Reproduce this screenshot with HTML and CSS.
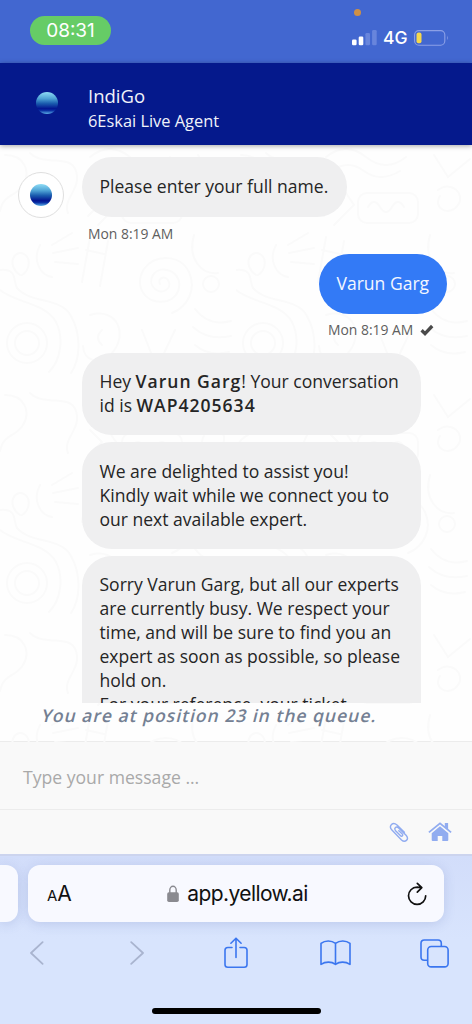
FILE: index.html
```html
<!DOCTYPE html>
<html lang="en">
<head>
  <meta charset="UTF-8" />
  <meta name="viewport" content="width=device-width, initial-scale=1.0"/>
  <title>IndiGo - 6Eskai Live Agent</title>
  <link rel="stylesheet" href="styles.css">
</head>
<body>
  <div class="status-bar">
    <span class="mic-dot"></span>
    <div class="clock">08:31</div>
    <div class="status-icons">
      <svg class="signal" width="25" height="16" viewBox="0 0 25 16">
        <rect x="0" y="9.5" width="4.6" height="5.8" rx="1.3" fill="#fff"/>
        <rect x="6.7" y="6.4" width="4.6" height="8.9" rx="1.3" fill="#fff"/>
        <rect x="13.4" y="3" width="4.6" height="12.3" rx="1.3" fill="#6885dc"/>
        <rect x="20.1" y="0" width="4.6" height="15.3" rx="1.3" fill="#6885dc"/>
      </svg>
      <span class="network">4G</span>
      <svg class="battery" width="36" height="16" viewBox="0 0 36 16">
        <rect x=".6" y=".6" width="30.2" height="14.6" rx="4.2" fill="none" stroke="#8ca0e6" stroke-width="1.1"/>
        <rect x="2.5" y="2.5" width="5" height="10.8" rx="2" fill="#f6d84c"/>
        <path d="M33 5.5q1.6 2.4 0 4.8z" fill="#8ca0e6"/>
      </svg>
    </div>
  </div>

  <header class="chat-header">
    <div class="logo"></div>
    <div class="titles">
      <div class="brand">IndiGo</div>
      <div class="agent">6Eskai Live Agent</div>
    </div>
  </header>

  <main class="conversation">
    <svg class="doodles" width="472" height="597" viewBox="0 0 472 597">
      <defs>
        <pattern id="doodle" width="236" height="240" patternUnits="userSpaceOnUse">
          <g fill="none" stroke="#fafafa" stroke-width="2" stroke-linecap="round">
            <path d="M160 139c-3-5 4-9 8-4 5 8-5 15-13 9-9-8-1-22 12-19 17 4 16 26 0 31-21 5-34-15-23-32 11-15 36-15 45 3 8 18-2 35-17 41"/>
            <path d="M0 125c18-2 13 12 17 18 14 16 44 9 54 28 10 18 10 42 0 57M0 145c16 13 46 13 56 32 8 16 5 38-7 50M20 130c-14-10-6-26 4-21 8 5 5 17-2 21"/>
            <circle cx="27" cy="198" r="20"/>
            <circle cx="27" cy="198" r="12"/>
            <path d="M40 100c-8 15 0 30 12 32M52 100l20-12M53 108l25-5M55 117l23 2M90 92l-8 45M108 96l-8 45M86 105l18 4"/>
            <path d="M5 10c20 0 26 17 18 30S4 48 0 66M30 8c14 14 40 0 46 18s-14 28-8 42M90 12q20-16 40 0t40 0M96 26q16-12 32 0t36 0"/>
            <rect x="122" y="48" width="60" height="30" rx="9"/>
            <path d="M132 62q6-10 12 0t12 0 12 0M194 90c-7 24 8 40 24 38M198 10l14 22 22-18M202 45c12-10 28 3 20 15s-26 4-18-9"/>
            <path d="M90 170c28-8 38 20 22 38-14 14-28 7-29-7M102 185q-8 8 0 15M142 185l15 38 18-38M137 228q22 12 46-2M195 164q14 18 36 12M193 182q15 14 38 9M195 200q14 12 34 7"/>
            <circle cx="211" cy="139" r="8"/>
            <path d="M90 45l12 12-14 14M103 38l15 22-20 20"/>
          </g>
        </pattern>
      </defs>
      <rect width="472" height="597" fill="url(#doodle)"/>
    </svg>

    <div class="messages">
      <div class="row">
        <div class="avatar"><div class="logo"></div></div>
        <div class="bubble short">Please enter your full name.</div>
      </div>
      <div class="time">Mon 8:19 AM</div>

      <div class="bubble user">Varun Garg</div>
      <div class="time sent">Mon 8:19 AM
        <svg width="14" height="12" viewBox="0 0 14 12"><path d="M1.6 6.3L5 9.6 12.2 2" fill="none" stroke="#4a4a4a" stroke-width="3.3"/></svg>
      </div>

      <div class="bubble">Hey <b>Varun Garg</b>! Your conversation<br>id is <b>WAP4205634</b></div>
      <div class="bubble">We are delighted to assist you!<br>Kindly wait while we connect you to<br>our next available expert.</div>
      <div class="bubble">Sorry Varun Garg, but all our experts<br>are currently busy. We respect your<br>time, and will be sure to find you an<br>expert as soon as possible, so please<br>hold on.<br>For your reference, your ticket</div>
    </div>

    <div class="queue">You are at position 23 in the queue.</div>
  </main>

  <div class="message-input">Type your message ...</div>
  <div class="tools">
    <svg width="20" height="21" viewBox="0 0 20 21" fill="none" stroke="#91acf0" stroke-width="1.4" stroke-linecap="round">
      <path d="M15.4 10.2L8 3.100C3.800-.8-.8 4 2.900 8l9.600 10c3.700 3.200 7.900-.7 4.800-4.500L9.600 5.900C6.800 3.900 4.700 6.300 6.600 8.700l5.200 5.200c1.300 1 2.600-.5 1.500-1.800L9.800 8.700"/>
    </svg>
    <svg width="24" height="20" viewBox="0 0 24 20" fill="#91acf0">
      <path d="M12 4.300L3.700 11.200V18q0 1 1 1h5v-4.900h4.600V19h5q1 0 1-1v-6.800z"/>
      <path d="M.9 10.400L12 1.300l11.100 9.100" fill="none" stroke="#91acf0" stroke-width="1.8"/>
      <path d="M16.800 1h3.300v7l-3.300-2.700z"/>
    </svg>
  </div>

  <footer class="browser-bar">
    <div class="tabs">
      <div class="prev-tab"></div>
      <div class="address">
        <span class="text-size"><small>A</small>A</span>
        <div class="url">
          <svg width="12" height="18" viewBox="0 0 12 18">
            <path d="M2.800 8V5a3.200 3.700 0 0 1 6.400 0v3" fill="none" stroke="#8a8a90" stroke-width="1.4"/>
            <rect x=".2" y="7.3" width="11.6" height="9.7" rx="1.7" fill="#8a8a90"/>
          </svg>
          <span>app.yellow.ai</span>
        </div>
        <svg class="reload" width="20" height="24" viewBox="0 0 20 24" fill="none" stroke="#111" stroke-width="1.7" stroke-linecap="round" stroke-linejoin="round">
          <path d="M10 5.200a8.600 8.600 0 1 0 8.700 8.600M10 5.200l4.500.3M10.300 1.300l4.500 4.300-4.500 4.500"/>
        </svg>
      </div>
    </div>
    <nav class="nav">
      <svg width="14" height="24" viewBox="0 0 14 24" fill="none" stroke="#a9b4cf" stroke-width="1.8" stroke-linecap="round" stroke-linejoin="round"><path d="M12.600 1.200L1 12l11.600 10.800"/></svg>
      <svg width="14" height="24" viewBox="0 0 14 24" fill="none" stroke="#a9b4cf" stroke-width="1.8" stroke-linecap="round" stroke-linejoin="round"><path d="M1.200 1.200L13 12 1.200 22.800"/></svg>
      <svg width="24" height="32" viewBox="0 0 24 32" fill="none" stroke="#3b76ef" stroke-width="1.6" stroke-linecap="round" stroke-linejoin="round"><path d="M8 10.500H3.800Q1 10.500 1 13.300v14.200q0 2.800 2.800 2.800h16.400q2.800 0 2.800-2.800V13.300q0-2.800-2.800-2.800H16M12 20.500V1.300M6.900 6.200L12 1.200l5.100 5"/></svg>
      <svg width="31" height="26" viewBox="0 0 31 26" fill="none" stroke="#3b76ef" stroke-width="1.6" stroke-linejoin="round"><path d="M15.500 3.400C11.500.1 5 .1 1 3.400v21c4.500-3 10.500-3 14.500 0 4-3 10-3 14.500 0v-21C26 .1 19.500.1 15.500 3.400zv21"/></svg>
      <svg width="29" height="29" viewBox="0 0 29 29" fill="none" stroke="#3b76ef" stroke-width="1.6"><path d="M7.500 21.300H4.300Q1 21.300 1 18V4.300Q1 1 4.300 1H18q3.300 0 3.300 3.300v3.200"/><rect x="7.7" y="7.5" width="20.4" height="20.4" rx="3.5"/></svg>
    </nav>
    <div class="home-indicator"></div>
  </footer>
</body>
</html>
```
FILE: styles.css
```css
body {
  font-family: "Open Sans", sans-serif;
  margin: 0;
  width: 472px;
  height: 1024px;
  overflow: hidden;
  display: flex;
  flex-direction: column;
  background-color: #fefefe;
}

svg {
  display: block;
  flex-shrink: 0;
}

.status-bar {
  position: relative;
  height: 63px;
  flex-shrink: 0;
  box-sizing: border-box;
  padding: 16px 22px 0 30px;
  display: flex;
  justify-content: space-between;
  align-items: flex-start;
  background-color: #4267d0;
  color: #fff;
  font-family: Inter, sans-serif;
}

.mic-dot {
  position: absolute;
  left: 354px;
  top: 9px;
  width: 7px;
  height: 7px;
  border-radius: 50%;
  background-color: #cf9045;
}

.clock {
  width: 81px;
  height: 29px;
  line-height: 30px;
  border-radius: 15px;
  background-color: #66cc66;
  text-align: center;
  font-size: 19px;
  font-weight: 400;
}

.status-icons {
  display: flex;
  align-items: center;
  padding-top: 13px;
}

.network {
  width: 25px;
  margin: 0 6px 0 6px;
  font-size: 17.5px;
  line-height: 18px;
  font-weight: 500;
}

.chat-header {
  position: relative;
  z-index: 1;
  height: 81.5px;
  flex-shrink: 0;
  display: flex;
  background-color: #05198c;
  color: #f0f2fa;
  box-shadow: 0 1px 5px rgba(0, 0, 0, 0.35);
}

.logo {
  width: 22px;
  height: 22px;
  border-radius: 50%;
  background: linear-gradient(#8edcf5 0%, #4fa3d5 30%, #1a5cae 52%, #02138f 76%, #0a2fa4 84%, #5cb2e8 100%);
}

.chat-header .logo {
  margin: 29px 0 0 36px;
}

.titles {
  margin: 20px 0 0 30px;
}

.brand {
  font-size: 18.5px;
  line-height: 25px;
}

.agent {
  font-size: 16.4px;
  line-height: 26px;
}

.conversation {
  position: relative;
  height: 596.5px;
  flex-shrink: 0;
}

.doodles {
  position: absolute;
  left: 0;
  top: 0;
}

.messages {
  position: relative;
  box-sizing: border-box;
  height: 558.5px;
  padding: 12.5px 0 0 82px;
  overflow: hidden;
}

.row {
  display: flex;
  margin-left: -64px;
}

.avatar {
  width: 44px;
  height: 44px;
  margin: 15px 18px 0 0;
  border: 1px solid #dfdfdf;
  border-radius: 50%;
  background-color: #fff;
  display: flex;
  align-items: center;
  justify-content: center;
}

.bubble {
  box-sizing: border-box;
  width: 339px;
  margin-bottom: 7px;
  padding: 16.5px 0 18px 17.5px;
  border-radius: 30px;
  background-color: #efeff0;
  color: #252525;
  font-size: 17.55px;
  line-height: 24px;
  white-space: nowrap;
}

.bubble b {
  font-weight: 600;
  letter-spacing: 1px;
}

.bubble.short {
  width: 265px;
  height: 60px;
  margin: 0;
}

.bubble.user {
  width: 128px;
  height: 60px;
  margin: 10px 0 0 237px;
  background-color: #337af6;
  color: #f3f7ff;
}

.time {
  margin: 6px 0 0 6px;
  height: 20px;
  line-height: 20px;
  font-size: 13.9px;
  color: #5e5e5e;
}

.time.sent {
  display: flex;
  align-items: center;
  gap: 7px;
  margin: 6px 0 12.7px 246px;
}

.queue {
  position: relative;
  padding-left: 42px;
  font-size: 17.5px;
  line-height: 25px;
  font-weight: 600;
  letter-spacing: 1px;
  transform: skewX(-14deg);
  white-space: nowrap;
  color: #748093;
}

.message-input {
  box-sizing: border-box;
  height: 69px;
  flex-shrink: 0;
  padding-left: 23px;
  border-top: 1px solid #ececec;
  border-bottom: 1px solid #ececec;
  background-color: #f9f9f9;
  color: #a9a9a9;
  font-size: 17.6px;
  line-height: 70px;
}

.tools {
  height: 44px;
  flex-shrink: 0;
  box-sizing: border-box;
  padding: 12px 20px 0 0;
  display: flex;
  justify-content: flex-end;
  gap: 19px;
  background-color: #f9f9f9;
}

.browser-bar {
  height: 170px;
  flex-shrink: 0;
  box-sizing: border-box;
  border-top: 2px solid #ccd4ee;
  background: linear-gradient(#d2ddfa, #d8e4fd 50%);
  font-family: Inter, sans-serif;
}

.tabs {
  display: flex;
  gap: 10px;
  padding-top: 9px;
}

.prev-tab {
  width: 18px;
  height: 57px;
  border-radius: 0 12px 12px 0;
  background-color: #f8f9ff;
  box-shadow: 0 2px 12px rgba(70, 90, 160, 0.18);
}

.address {
  width: 416px;
  height: 57px;
  box-sizing: border-box;
  padding: 0 17px 0 19px;
  border-radius: 12px;
  background-color: #f8f9ff;
  box-shadow: 0 2px 12px rgba(70, 90, 160, 0.18);
  display: flex;
  align-items: center;
  justify-content: space-between;
  color: #111;
}

.text-size {
  width: 28px;
  font-size: 21px;
}

.text-size small {
  font-size: 15px;
}

.url {
  display: flex;
  align-items: center;
  gap: 8px;
  margin-right: 7px;
  font-size: 21px;
  letter-spacing: -0.6px;
}

.nav {
  display: grid;
  grid-template-columns: repeat(5, 99.3px);
  justify-content: center;
  justify-items: center;
  align-items: center;
  height: 32px;
  margin-top: 15px;
}

.home-indicator {
  width: 169px;
  height: 6px;
  margin: 39px auto 0;
  border-radius: 3px;
  background-color: #000;
}
```
